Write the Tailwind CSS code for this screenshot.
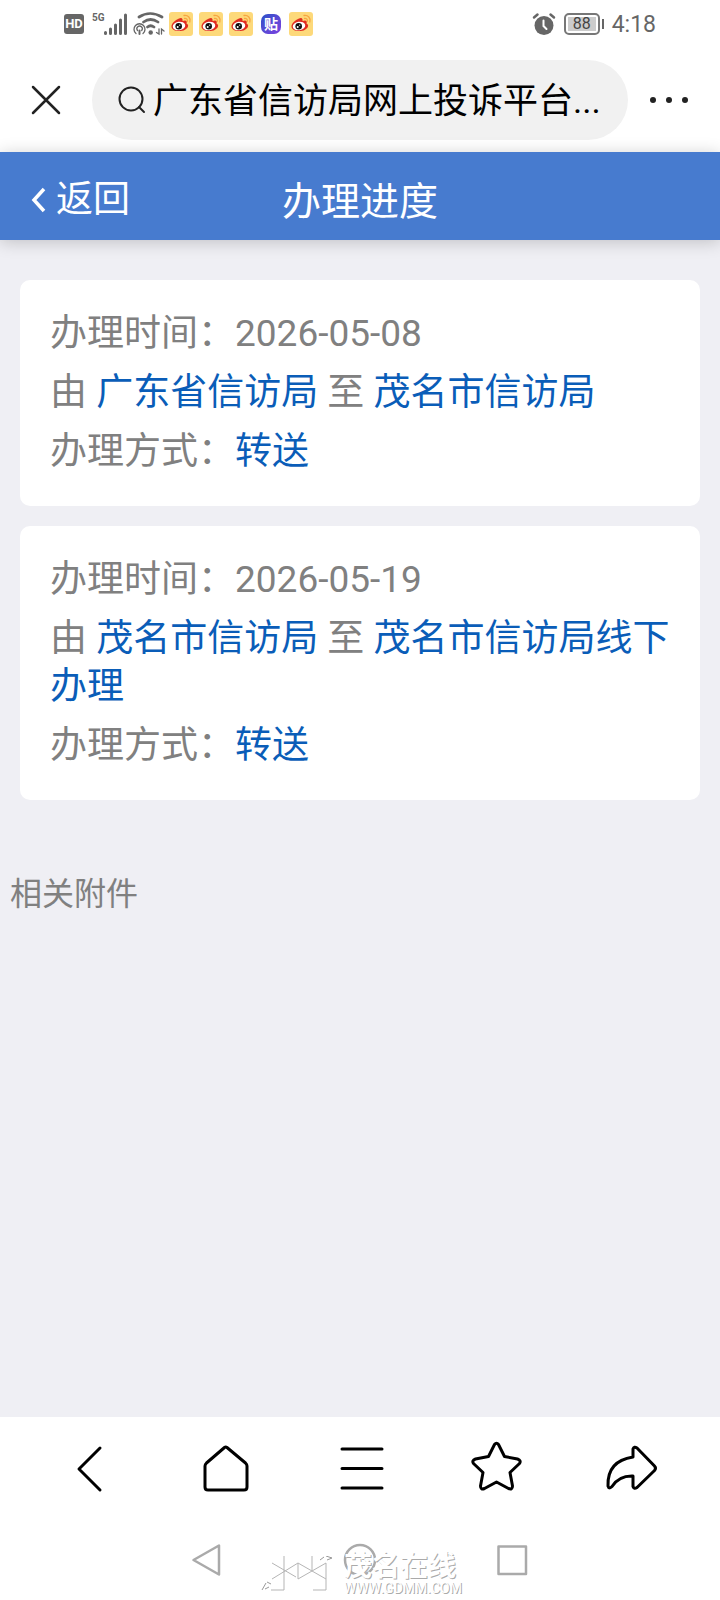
<!DOCTYPE html>
<html lang="zh-CN">
<head>
    <meta charset="UTF-8">
    <meta name="viewport" content="width=device-width, initial-scale=1.0">
    <title>办理进度</title>
    <script src="https://cdn.jsdelivr.net/npm/@tailwindcss/browser@4"></script>
</head>
<body class="min-h-screen flex flex-col bg-[#efeff4] font-[Roboto,'Noto_Sans_CJK_SC',sans-serif]">
    <!-- Shared icon shapes -->
    <svg class="hidden" aria-hidden="true">
        <symbol id="weibo" viewBox="0 0 24 24">
            <rect width="24" height="24" rx="3" fill="#fdd97a"/>
            <path d="M10 6.500C13 5 14 7 13.500 9C17 7.500 18.500 9 17.500 11.500C20.500 13 19 16 16 17.700C11 20.500 2.500 19 2.500 14.500C2.500 11.500 6 8 10 6.500Z" fill="#e02c20"/>
            <ellipse cx="10" cy="14" rx="6.300" ry="4.300" fill="#fff" transform="rotate(-9 10 14)"/>
            <circle cx="9.700" cy="14.200" r="3.300" fill="#111"/>
            <circle cx="8.700" cy="15" r="1" fill="#fff"/>
            <circle cx="10.700" cy="13.200" r=".6" fill="#fff"/>
            <path d="M15 3.500C19 2.800 22 6 20.800 10M15.500 6.500C17.500 6.200 18.800 7.500 18.300 9.300" fill="none" stroke="#f7a541" stroke-width="1.300" stroke-linecap="round"/>
        </symbol>
    </svg>

    <!-- Status bar -->
    <div class="h-12 bg-white flex items-center justify-between pl-16 pr-16 text-[#666]">
        <div class="flex items-center">
            <span class="w-5 h-5 rounded-[3px] bg-[#666] text-white text-[13px] leading-5 font-bold text-center">HD</span>
            <span class="ml-2 mb-3 w-3 text-[10px] leading-3 font-bold">5G</span>
            <svg class="w-6 h-6" viewBox="0 0 24 24" stroke="currentColor" stroke-width="3" stroke-linecap="round">
                <path d="M1.500 20.500V21.500M6.500 17V21.500M11.500 13V21.500M16.500 8V21.500M21.500 3V21.500"/>
            </svg>
            <svg class="ml-[5px] w-8 h-6" viewBox="0 0 32 24" fill="none" stroke="currentColor" stroke-linecap="round">
                <path d="M6 5Q17-2 29 5M10.500 10Q17.500 5 25 10M14.500 15Q17.500 12.500 21 15" stroke-width="2.700"/>
                <circle cx="17.700" cy="20.500" r="2.200" fill="currentColor" stroke="none"/>
                <path d="M3 21.500A5.500 5.500 0 1 1 10 21.500M4.500 18.500A2.700 2.700 0 1 1 8.700 18.500" stroke-width="1.300"/>
                <path d="M6.500 18.500V22" stroke-width="2"/>
                <path d="M26 17V22L23.500 20.500M28.500 22V17L31 19" stroke-width="1.300"/>
            </svg>
            <svg class="ml-1 w-6 h-6"><use href="#weibo"/></svg>
            <svg class="ml-1.5 w-6 h-6"><use href="#weibo"/></svg>
            <svg class="ml-1.5 w-6 h-6"><use href="#weibo"/></svg>
            <span class="ml-2 w-5 h-5 rounded-[7px] bg-linear-to-br from-[#2450c8] to-[#7a3fe0] text-white text-sm leading-5 font-bold text-center">贴</span>
            <svg class="ml-2 w-6 h-6"><use href="#weibo"/></svg>
        </div>
        <div class="flex items-center">
            <svg class="w-6 h-6" viewBox="0 0 24 24" fill="none" stroke-linecap="round">
                <circle cx="12" cy="13.500" r="9.500" fill="currentColor"/>
                <path d="M2 5.500L5.500 2.500M18.500 2.500L22 5.500" stroke="currentColor" stroke-width="2.500"/>
                <path d="M11.500 8.500V14L14.500 17" stroke="#fff" stroke-width="2"/>
            </svg>
            <span class="ml-2 w-9 h-[22px] rounded-[5px] border-2 border-[#777] p-0.5 flex">
                <span class="flex-1 bg-[#ccc] text-[#444] text-[16px] leading-[14px] text-center">88</span>
            </span>
            <span class="ml-0.5 w-0.5 h-2.5 bg-[#666]"></span>
            <span class="ml-2 pt-0.5 text-[23px] leading-6">4:18</span>
        </div>
    </div>

    <!-- Browser address bar -->
    <div class="bg-white flex items-center pt-3 pb-3 pl-7 pr-7">
        <button type="button" aria-label="关闭" class="shrink-0">
            <svg class="w-9 h-9" viewBox="0 0 36 36" fill="none" stroke="#222" stroke-width="2.500" stroke-linecap="round">
                <path d="M5 5L31 31M31 5L5 31"/>
            </svg>
        </button>
        <button type="button" class="ml-7 flex-1 min-w-0 h-20 rounded-full bg-[#f1f1f1] flex items-center pl-[25px] pr-8 text-left">
            <svg class="w-8 h-8 shrink-0" viewBox="0 0 32 32" fill="none" stroke="#222" stroke-width="2" stroke-linecap="round">
                <circle cx="14" cy="15" r="11.500"/>
                <path d="M22 23L27 28"/>
            </svg>
            <span class="ml-1 pt-1 text-[35px] leading-[48px] text-black whitespace-nowrap">广东省信访局网上投诉平台...</span>
        </button>
        <button type="button" aria-label="更多" class="ml-5 shrink-0">
            <svg class="w-11 h-6" viewBox="0 0 44 24" fill="#222">
                <circle cx="5" cy="12" r="3"/>
                <circle cx="21" cy="12" r="3"/>
                <circle cx="37" cy="12" r="3"/>
            </svg>
        </button>
    </div>

    <header class="h-[88px] bg-[#477bcf] text-white grid grid-cols-[1fr_auto_1fr] items-center pt-3 shadow-[0_2px_16px_rgba(0,0,0,0.2)]">
        <a href="#" class="flex items-center pl-7 pb-1 text-[37px] leading-[48px]">
            <svg class="mr-2 w-5 h-7" viewBox="0 0 20 28" fill="none" stroke="currentColor" stroke-width="3.500">
                <path d="M16 3L6 14L16 25"/>
            </svg>返回
        </a>
        <h1 class="text-[39px] leading-[48px]">办理进度</h1>
    </header>

    <main class="flex-1 pt-10 text-[#808080]">
        <section class="mx-5 mb-5 p-[30px] rounded-[10px] bg-white text-[37px] leading-[48px] space-y-[11px]">
            <p>办理时间：2026-05-08</p>
            <p>由 <span class="text-[#0a5db8]">广东省信访局</span> 至 <span class="text-[#0a5db8]">茂名市信访局</span></p>
            <p>办理方式：<span class="text-[#0a5db8]">转送</span></p>
        </section>
        <section class="mx-5 mb-5 p-[30px] rounded-[10px] bg-white text-[37px] leading-[48px] space-y-[11px]">
            <p>办理时间：2026-05-19</p>
            <p>由 <span class="text-[#0a5db8]">茂名市信访局</span> 至 <span class="text-[#0a5db8]">茂名市信访局线下办理</span></p>
            <p>办理方式：<span class="text-[#0a5db8]">转送</span></p>
        </section>
        <h2 class="mt-[70px] px-[10px] text-[32px] leading-[48px]">相关附件</h2>
    </main>

    <footer class="relative bg-white">
        <!-- Browser toolbar -->
        <nav class="grid grid-cols-5 justify-items-center px-5 pt-[22px] pb-[25px] text-black">
            <button type="button" aria-label="后退">
                <svg class="w-14 h-14" viewBox="0 0 56 56" fill="none" stroke="currentColor" stroke-width="3" stroke-linecap="round" stroke-linejoin="round">
                    <path d="M40 9L19 30L40 51"/>
                </svg>
            </button>
            <button type="button" aria-label="主页">
                <svg class="w-14 h-14" viewBox="0 0 56 56" fill="none" stroke="currentColor" stroke-width="3" stroke-linejoin="round">
                    <path d="M28.500 8.500Q29.700 7.500 31 8.500L49.500 24Q51 25.500 51 27V48Q51 51 48 51H12Q9 51 9 48V27Q9 25.500 10.500 24Z"/>
                </svg>
            </button>
            <button type="button" aria-label="菜单">
                <svg class="w-14 h-14" viewBox="0 0 56 56" fill="none" stroke="currentColor" stroke-width="3" stroke-linecap="round">
                    <path d="M10 10H50M10 29.500H50M10 49H50"/>
                </svg>
            </button>
            <button type="button" aria-label="收藏">
                <svg class="w-14 h-14" viewBox="0 0 56 56" fill="none" stroke="currentColor" stroke-width="3" stroke-linejoin="round">
                    <path d="M26.500 5.500Q28.500 3 30.500 5.500L36.500 17.500L49.500 20Q53.500 21.500 51.500 24.500L42 33.500L44.500 47Q44.500 51 40.500 49.500L28.500 43L16.500 49.500Q12.500 51 12.500 47L15 33.500L5.500 24.500Q3.500 21.500 7.500 20L20.500 17.500Z"/>
                </svg>
            </button>
            <button type="button" aria-label="分享">
                <svg class="w-14 h-14" viewBox="0 0 56 56" fill="none" stroke="currentColor" stroke-width="3" stroke-linejoin="round">
                    <path d="M29 18V10Q30 7 33 9L50.500 27Q52.500 29 50.500 31.500L33 48.500Q30 50.500 29 47.500V37Q15 36.500 8 47.500Q5 50.500 4 47Q3 22 29 18Z"/>
                </svg>
            </button>
        </nav>
        <!-- System navigation -->
        <nav class="grid grid-cols-3 justify-items-center px-[130px] pt-5 pb-5 text-[#aaa]">
            <button type="button" aria-label="返回键">
                <svg class="w-10 h-10" viewBox="0 0 40 40" fill="none" stroke="currentColor" stroke-width="2.500" stroke-linejoin="round">
                    <path d="M32 5.500V34.500L6.500 20Z"/>
                </svg>
            </button>
            <button type="button" aria-label="主屏幕">
                <svg class="w-10 h-10" viewBox="0 0 40 40" fill="none" stroke="currentColor" stroke-width="2.500">
                    <circle cx="20" cy="20" r="15"/>
                </svg>
            </button>
            <button type="button" aria-label="最近任务">
                <svg class="w-10 h-10" viewBox="0 0 40 40" fill="none" stroke="currentColor" stroke-width="2.500" stroke-linejoin="round">
                    <rect x="5.500" y="6.500" width="27.500" height="27.500"/>
                </svg>
            </button>
        </nav>
        <!-- Watermark -->
        <div class="absolute bottom-1 inset-x-0 flex justify-center items-end pointer-events-none">
            <svg class="w-[84px] h-10" viewBox="0 0 84 40" fill="none" stroke="#b5b5b5" stroke-width="1">
                <path d="M12 7L36 21M12 23L38 7L66 23M38 7V23L66 7M24 0V34H11M52 0V15M66 7V34H53"/>
                <path d="M2 34L6 27M7 26L11 28M5 33L9 31M60 4L64 1M66 0L72 2L67 4" stroke="#999"/>
            </svg>
            <div class="w-[116px] text-white whitespace-nowrap">
                <p class="text-[28px] leading-[26px] font-bold [text-shadow:1px_1px_0_#aaa]">茂名在线</p>
                <p class="text-[14px] leading-4 [text-shadow:1px_1px_0_#aaa]">WWW.GDMM.COM</p>
            </div>
        </div>
    </footer>
</body>
</html>
